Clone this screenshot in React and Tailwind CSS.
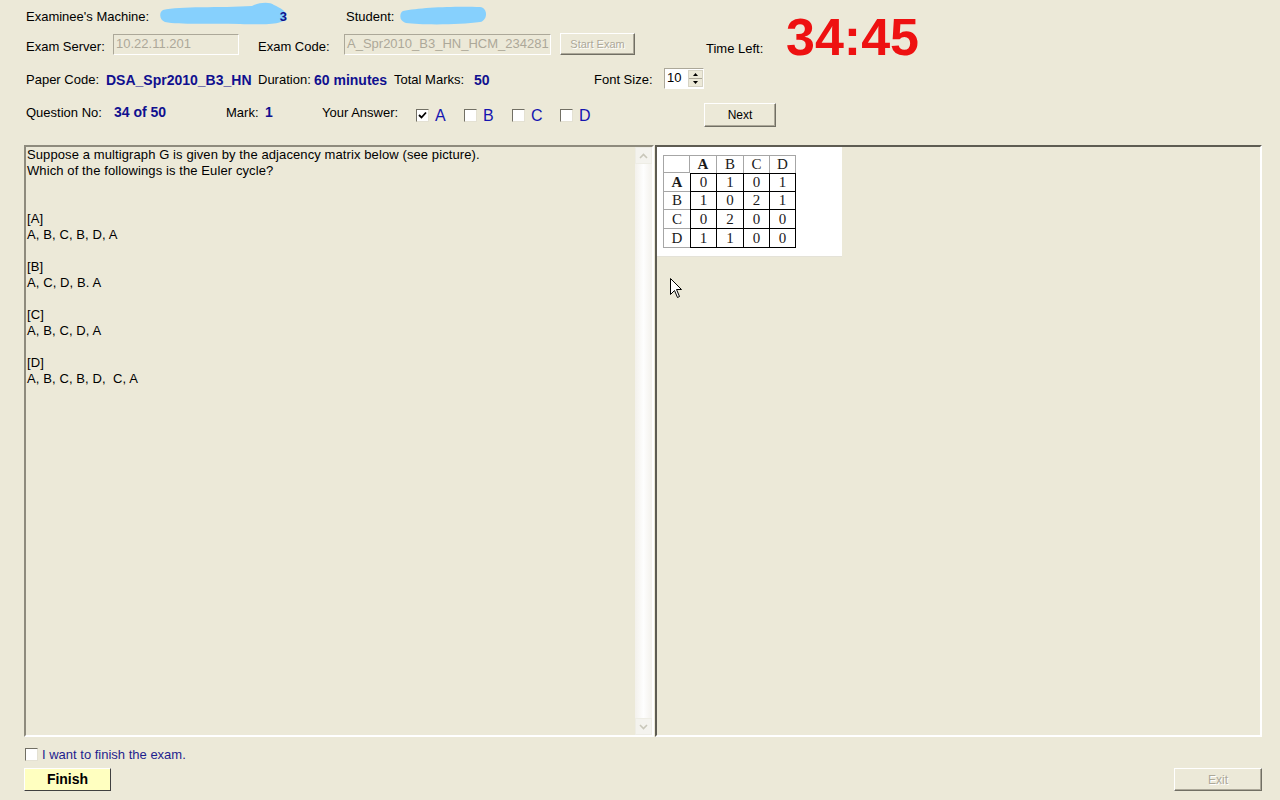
import { Fragment } from 'react';

const sunken =
  'border border-t-[#aca899] border-l-[#aca899] border-b-white border-r-white';

function Blob({ width, tail, variant }) {
  return (
    <span className="relative flex h-[20px] shrink-0 items-center" style={{ width }}>
      {variant === 1 ? (
        <svg width="130" height="26" viewBox="0 0 130 26" className="absolute left-0 top-[-5px]">
          <path
            d="M3 9 C20 5 60 7 92 5 C100 1 110 1 114 4 C120 7 126 9 126 15 C127 23 110 24 80 23 C50 22 20 24 5 21 C-1 19 -1 11 3 9 Z"
            fill="#86d0fd"
          />
        </svg>
      ) : (
        <svg width="88" height="22" viewBox="0 0 88 22" className="absolute left-0 top-[-2px]">
          <path
            d="M3 7 C20 3 60 2 80 3 C88 4 88 16 80 18 C60 21 20 21 6 19 C-1 17 -1 9 3 7 Z"
            fill="#86d0fd"
          />
        </svg>
      )}
      {tail && (
        <span className="absolute right-0 top-[1px] text-[13px] font-bold text-[#10108f]">{tail}</span>
      )}
    </span>
  );
}

function Label({ w, children, className = '' }) {
  return (
    <span className={`shrink-0 whitespace-nowrap ${className}`} style={{ width: w }}>
      {children}
    </span>
  );
}

function Value({ w, children }) {
  return (
    <span
      className="shrink-0 whitespace-nowrap text-[14px] font-bold text-[#10108f]"
      style={{ width: w }}
    >
      {children}
    </span>
  );
}

function Check({ checked }) {
  return (
    <span className="flex h-[13px] w-[13px] shrink-0 items-center justify-center border border-t-[#716f64] border-l-[#716f64] border-b-[#e4e1d3] border-r-[#e4e1d3] bg-white">
      {checked && (
        <svg width="9" height="9" viewBox="0 0 9 9">
          <path d="M1 4 L3.5 6.5 L8 1.5" stroke="#000" strokeWidth="1.8" fill="none" />
        </svg>
      )}
    </span>
  );
}

function Answer({ letter, checked, w }) {
  return (
    <span className="flex shrink-0 items-center gap-[6px]" style={{ width: w }}>
      <Check checked={checked} />
      <span className="pt-[2px] text-[16px] leading-none text-[#1515b0]">{letter}</span>
    </span>
  );
}

function Btn({ w, h, disabled, className = '', children }) {
  return (
    <span
      className={`flex shrink-0 items-center justify-center border border-t-white border-l-white border-b-[#716f64] border-r-[#716f64] shadow-[inset_-1px_-1px_0_#aca899] ${
        disabled ? 'text-[#aca899] [text-shadow:1px_1px_0_#fff]' : 'text-black'
      } ${className}`}
      style={{ width: w, height: h }}
    >
      {children}
    </span>
  );
}

const matrix = [
  ['A', '0', '1', '0', '1'],
  ['B', '1', '0', '2', '1'],
  ['C', '0', '2', '0', '0'],
  ['D', '1', '1', '0', '0'],
];
const colW = [27, 27, 27, 26, 26];
const rowH = [18, 19, 18, 19, 19];

function Matrix() {
  const head = ['', 'A', 'B', 'C', 'D'];
  return (
    <div className="font-['Liberation_Serif','Times_New_Roman',serif] text-[15px] text-[#1a1a1a]">
      <div className="flex">
        {head.map((h, i) => (
          <div
            key={i}
            className={`flex items-center justify-center border-t border-r border-[#a6a6a6] ${
              i === 0 ? 'border-l border-b' : ''
            } ${h === 'A' ? 'font-bold' : ''}`}
            style={{ width: colW[i], height: rowH[0] }}
          >
            {h}
          </div>
        ))}
      </div>
      {matrix.map((row, r) => (
        <div key={r} className="flex">
          {row.map((c, i) => (
            <div
              key={i}
              className={`flex items-center justify-center ${
                i === 0
                  ? 'border-l border-b border-[#a6a6a6]'
                  : `border-r border-b border-black ${i === 1 ? 'border-l' : ''} ${r === 0 ? 'border-t' : ''}`
              } ${c === 'A' ? 'font-bold' : ''}`}
              style={{ width: colW[i], height: rowH[r + 1] }}
            >
              {c}
            </div>
          ))}
        </div>
      ))}
    </div>
  );
}

const question = [
  'Suppose a multigraph G is given by the adjacency matrix below (see picture).',
  'Which of the followings is the Euler cycle?',
  '',
  '',
  '[A]',
  'A, B, C, B, D, A',
  '',
  '[B]',
  'A, C, D, B. A',
  '',
  '[C]',
  'A, B, C, D, A',
  '',
  '[D]',
  'A, B, C, B, D,  C, A',
];

function ScrollArrow({ up }) {
  return (
    <div className="flex h-[17px] w-[17px] items-center justify-center border border-[#eeede5] bg-[#f4f3ee]">
      <svg width="9" height="6" viewBox="0 0 9 6">
        <path
          d={up ? 'M1 5 L4.5 1.5 L8 5' : 'M1 1 L4.5 4.5 L8 1'}
          stroke="#c9c7ba"
          strokeWidth="1.6"
          fill="none"
        />
      </svg>
    </div>
  );
}

export default function App() {
  return (
    <div className="relative h-[800px] w-[1280px] overflow-hidden bg-[#ece9d8] font-['Liberation_Sans',Arial,sans-serif] text-[13px] text-black">
      <div className="flex h-[127px]">
        <div className="flex w-[780px] shrink-0 flex-col pl-[26px]">
          <div className="mt-[4px] flex h-[24px] items-center">
            <Label w={134} className="pt-[1px]">Examinee's Machine:</Label>
            <Blob width={127} tail="3" variant={1} />
            <Label w={59} />
            <Label w={54} className="pt-[1px]">Student:</Label>
            <Blob width={86} variant={2} />
          </div>

          <div className="mt-[4px] flex h-[24px] items-center">
            <Label w={87} className="pt-[6px]">Exam Server:</Label>
            <span className={`flex h-[21px] w-[126px] shrink-0 items-center overflow-hidden pl-[2px] text-[#aca899] ${sunken}`}>
              10.22.11.201
            </span>
            <Label w={19} />
            <Label w={86} className="pt-[6px]">Exam Code:</Label>
            <span className={`flex h-[21px] w-[207px] shrink-0 items-center overflow-hidden whitespace-nowrap pl-[2px] text-[#aca899] ${sunken}`}>
              A_Spr2010_B3_HN_HCM_234281
            </span>
            <Label w={9} />
            <Btn w={75} h={22} disabled className="text-[11px]">Start Exam</Btn>
            <Label w={71} />
            <Label w={70} className="pt-[9px]">Time Left:</Label>
          </div>

          <div className="mt-[12px] flex h-[24px] items-center">
            <Label w={80}>Paper Code:</Label>
            <Value w={152}>DSA_Spr2010_B3_HN</Value>
            <Label w={56}>Duration:</Label>
            <Value w={80}>60 minutes</Value>
            <Label w={80}>Total Marks:</Label>
            <Value w={120}>50</Value>
            <Label w={70}>Font Size:</Label>
            <span className={`-mt-[4px] flex h-[21px] w-[40px] shrink-0 items-center justify-between bg-white pl-[2px] ${sunken}`}>
              10
              <span className="flex h-[17px] w-[15px] flex-col border border-[#d6d3c4] bg-[#ece9d8]">
                <span className="flex flex-1 items-center justify-center border-b border-[#aca899]">
                  <svg width="5" height="3" viewBox="0 0 5 3"><path d="M0 3 L2.5 0 L5 3 Z" fill="#000" /></svg>
                </span>
                <span className="flex flex-1 items-center justify-center">
                  <svg width="5" height="3" viewBox="0 0 5 3"><path d="M0 0 L2.5 3 L5 0 Z" fill="#000" /></svg>
                </span>
              </span>
            </span>
          </div>

          <div className="mt-[11px] flex h-[24px] items-center">
            <Label w={88} className="pb-[5px]">Question No:</Label>
            <span className="w-[112px] shrink-0 pb-[5px] text-[14px] font-bold text-[#10108f]">34 of 50</span>
            <Label w={39} className="pb-[5px]">Mark:</Label>
            <span className="w-[57px] shrink-0 pb-[5px] text-[14px] font-bold text-[#10108f]">1</span>
            <Label w={94} className="pb-[5px]">Your Answer:</Label>
            <Answer letter="A" checked w={48} />
            <Answer letter="B" w={48} />
            <Answer letter="C" w={48} />
            <Answer letter="D" w={144} />
            <Btn w={72} h={24} className="text-[12px]">Next</Btn>
          </div>
        </div>

        <div className="ml-[6px] pt-[11px] text-[52px] font-bold leading-[52px] text-[#ee1111]">34:45</div>
      </div>

      <div className="mt-[18px] flex h-[592px] pl-[24px]">
        <div className="flex w-[630px] shrink-0 border-2 border-t-[#8e8b7d] border-l-[#8e8b7d] border-b-white border-r-white">
          <div className="flex-1 pl-[1px] leading-[16px] tracking-[0.1px]">
            {question.map((l, i) => (
              <div key={i} className="h-[16px] whitespace-pre">
                {l}
              </div>
            ))}
          </div>
          <div className="flex w-[17px] flex-col justify-between bg-gradient-to-r from-[#f3f1ec] via-[#fefefe] to-[#f3f1ec]">
            <ScrollArrow up />
            <ScrollArrow />
          </div>
        </div>

        <div className="ml-[1px] w-[607px] shrink-0 border-2 border-t-[#5e5c52] border-l-[#5e5c52] border-b-white border-r-white">
          <div className="h-[110px] w-[185px] border-b border-[#e4e2d8] bg-white pl-[6px] pt-[8px]">
            <Matrix />
          </div>
        </div>
      </div>

      <div className="mt-[11px] flex items-center pl-[25px]">
        <Check />
        <span className="ml-[4px] text-[13px] leading-[13px] text-[#1e1e8e]">I want to finish the exam.</span>
      </div>

      <div className="mt-[7px] flex w-[1262px] justify-between pl-[24px]">
        <span className="flex h-[23px] w-[87px] items-center justify-center border border-t-[#fff] border-l-[#fff] border-b-[#404040] border-r-[#404040] bg-[#ffffc0] text-[14px] font-bold">
          Finish
        </span>
        <Btn w={88} h={23} disabled className="text-[12px]">Exit</Btn>
      </div>

      <svg width="13" height="21" viewBox="0 0 13 21" className="absolute left-[670px] top-[278px]">
        <path d="M0.5 0.5 L0.5 16.5 L4.5 12.5 L7.5 19.5 L9.5 18.5 L6.5 11.5 L11.5 11.5 Z" fill="#fff" stroke="#000" strokeWidth="1" />
      </svg>
    </div>
  );
}
